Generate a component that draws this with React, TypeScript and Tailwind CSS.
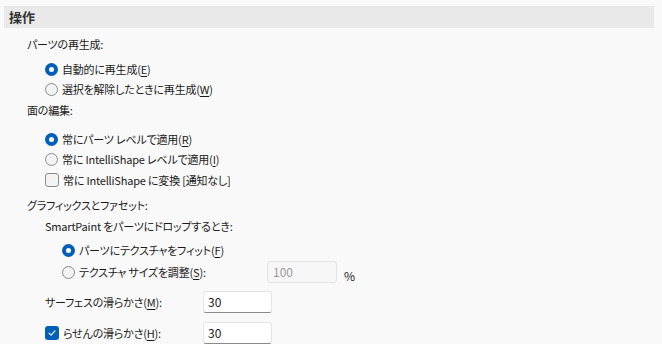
import React from "react";

const font = { fontFamily: '"Noto Sans CJK JP", "Noto Sans", sans-serif' };

function Radio({ checked }: { checked?: boolean }) {
  return checked ? (
    <span className="inline-flex h-[13px] w-[13px] shrink-0 items-center justify-center rounded-full bg-[#005fb8]">
      <span className="h-[5px] w-[5px] rounded-full bg-white" />
    </span>
  ) : (
    <span className="inline-block h-[13px] w-[13px] shrink-0 rounded-full border border-[#8b8b8b] bg-[#f3f3f3]" />
  );
}

function Check({ checked }: { checked?: boolean }) {
  return checked ? (
    <span className="inline-flex h-[14px] w-[14px] shrink-0 items-center justify-center rounded-[3px] bg-[#005fb8]">
      <svg width="10" height="10" viewBox="0 0 10 10">
        <path d="M2 5.2 L4.1 7.2 L8 2.8" fill="none" stroke="white" strokeWidth="1.1" strokeLinecap="round" strokeLinejoin="round" />
      </svg>
    </span>
  ) : (
    <span className="inline-block h-[14px] w-[14px] shrink-0 rounded-[3px] border border-[#8b8b8b] bg-[#f3f3f3]" />
  );
}

function Acc({ pre, k, colon }: { pre: string; k: string; colon?: boolean }) {
  return (
    <span>
      {pre}(<span className="underline underline-offset-2">{k}</span>){colon ? ":" : ""}
    </span>
  );
}

export default function App() {
  return (
    <div
      className="h-[344px] w-[662px] overflow-hidden bg-[#f9f9f9] text-[11px] tracking-[-0.2px] text-[#1a1a1a] [font-feature-settings:'palt']"
      style={font}
    >
      <div className="flex flex-col">
        <div className="ml-[4px] mt-[6px] flex h-[22px] w-[650px] items-center bg-[#e9e9e9] pl-[5px]">
          <span className="text-[13px] font-bold tracking-normal text-[#333]">操作</span>
        </div>

        <div className="ml-[27px] mt-[6px] flex h-[20px] items-center">パーツの再生成:</div>
        <div className="ml-[45px] mt-[5px] flex h-[20px] items-center gap-[4px]">
          <Radio checked />
          <Acc pre="自動的に再生成" k="E" />
        </div>
        <div className="ml-[45px] flex h-[20px] items-center gap-[4px]">
          <Radio />
          <Acc pre="選択を解除したときに再生成" k="W" />
        </div>

        <div className="ml-[27px] mt-[1px] flex h-[20px] items-center">面の編集:</div>
        <div className="ml-[45px] mt-[9px] flex h-[20px] items-center gap-[4px]">
          <Radio checked />
          <Acc pre="常にパーツ レベルで適用" k="R" />
        </div>
        <div className="ml-[45px] flex h-[20px] items-center gap-[4px]">
          <Radio />
          <Acc pre="常に IntelliShape レベルで適用" k="I" />
        </div>
        <div className="ml-[45px] mt-[1px] flex h-[20px] items-center gap-[4px]">
          <Check />
          <span>常に IntelliShape に変換 [通知なし]</span>
        </div>

        <div className="ml-[27px] mt-[5px] flex h-[20px] items-center">グラフィックスとファセット:</div>
        <div className="ml-[45px] mt-[1px] flex h-[20px] items-center">SmartPaint をパーツにドロップするとき:</div>
        <div className="ml-[62px] mt-[4px] flex h-[20px] items-center gap-[4px]">
          <Radio checked />
          <Acc pre="パーツにテクスチャをフィット" k="F" />
        </div>
        <div className="mt-[1px] flex h-[22px] items-center">
          <div className="ml-[62px] flex w-[205px] items-center gap-[4px]">
            <Radio />
            <Acc pre="テクスチャ サイズを調整" k="S" colon />
          </div>
          <div className="flex h-[22px] w-[70px] items-center rounded-[3px] border border-[#e3e3e3] bg-[#f7f7f7] pl-[5px] text-[12px] tracking-normal text-[#9a9a9a]">
            100
          </div>
          <span className="ml-[7px] mt-[7px] text-[12px]">%</span>
        </div>

        <div className="mt-[8px] flex h-[22px] items-center">
          <div className="ml-[45px] w-[158px]">
            <Acc pre="サーフェスの滑らかさ" k="M" colon />
          </div>
          <div className="flex h-[22px] w-[69px] items-center rounded-[3px] border border-[#e5e5e5] border-b-[#8a8a8a] bg-white pl-[4px] text-[12px] tracking-normal">
            30
          </div>
        </div>
        <div className="mt-[9px] flex h-[22px] items-center">
          <div className="ml-[45px] flex w-[158px] items-center gap-[4px]">
            <Check checked />
            <Acc pre="らせんの滑らかさ" k="H" colon />
          </div>
          <div className="flex h-[22px] w-[69px] items-center rounded-[3px] border border-[#e5e5e5] border-b-[#8a8a8a] bg-white pl-[4px] text-[12px] tracking-normal">
            30
          </div>
        </div>
      </div>
    </div>
  );
}
